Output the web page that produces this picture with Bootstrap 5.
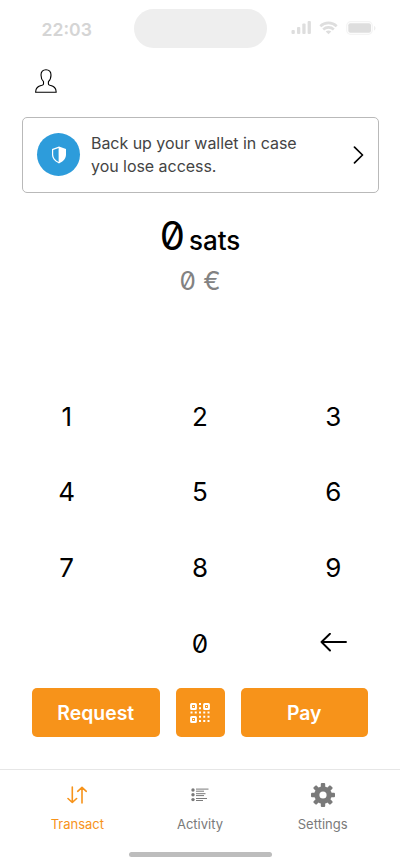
<!DOCTYPE html>
<html lang="en">
<head>
<meta charset="utf-8">
<meta name="viewport" content="width=device-width, initial-scale=1">
<title>Wallet</title>
<link href="https://cdn.jsdelivr.net/npm/bootstrap@5.3.0/dist/css/bootstrap.min.css" rel="stylesheet">
<style>
body{font-family:Inter,"Liberation Sans",sans-serif;color:#000;background:#fff}
svg{display:block;flex:none}
.screen{width:400px;height:866px;overflow:hidden}
.statusbar{height:57px;padding:0 23px 0 41.5px}
.clock{width:92px;font-size:17.6px;font-weight:600;line-height:20px;color:#d5d5d5;margin-top:20px}
.island{width:133.5px;height:39.500px;margin-top:8.500px;background:#eee}
.indicators{margin-top:20px;margin-left:24px}
.profile{height:59.500px;padding:12px 0 0 35px}
.notice{margin:0 21.500px;height:76px;border:1px solid #b9b9b9;border-radius:5px;padding:0 14px 0 14.500px;font-size:16px;letter-spacing:-.04px;line-height:22.700px;color:#444}
.shield{width:43px;height:43px;background:#2d9cdb}
.notice-text{margin-left:11px;padding-top:1px}
.amounts{height:186px;padding-top:17px;font-feature-settings:"zero"}
.amount{height:51px;line-height:52px;font-size:40px;font-weight:400}
.unit{font-size:26px;font-weight:500;margin-left:4px}
.fiat{font-size:26px;line-height:40px;color:#828282}
.key{height:75.600px;font-size:26px;line-height:75.600px;font-feature-settings:"zero"}
.key-zero{padding-top:1px}
.actions{padding:0 32px;height:49px;gap:16px;margin-top:7.100px}
.btn-orange,.btn-orange:hover{background:#f7931a;color:#fff;border:0;border-radius:5px;font-size:19.400px;font-weight:600;line-height:48px;padding:1px 0 0}
.scan{width:49px}
.tabs{margin-top:32px;height:97px;border-top:1px solid #e6e6e6;padding:0 16px}
.tab{height:82px;font-size:13px;line-height:18px;color:#7a7a7a;text-decoration:none}
.tab.current{color:#f7931a}
.tab-icon{height:45px;padding-top:5px}
.home{width:143px;height:5.500px;background:#bdbdbd}
</style>
<script src="https://cdn.jsdelivr.net/npm/bootstrap@5.3.0/dist/js/bootstrap.bundle.min.js"></script>
</head>
<body>
<div class="screen d-flex flex-column">
  <header class="statusbar d-flex align-items-start">
    <div class="clock flex-shrink-0">22:03</div>
    <div class="island rounded-pill flex-shrink-0"></div>
    <svg class="indicators" width="86" height="16" viewBox="0 0 86 16">
      <g fill="#dedede"><rect x=".5" y="10" width="3.300" height="4" rx="1"/><rect x="6" y="7" width="3.300" height="7" rx="1"/><rect x="11.300" y="3.500" width="3.300" height="10.500" rx="1"/><rect x="16.600" y="1" width="3.300" height="13" rx="1"/></g>
      <g fill="none" stroke="#dedede" stroke-width="2.700"><path d="M29.300 6.200a12 12 0 0 1 16.400 0"/><path d="M32.200 9.400a8 8 0 0 1 10.600 0"/></g>
      <path d="M34.700 11.500a4.500 4.500 0 0 1 5.600 0L37.500 14.200Z" fill="#dedede"/>
      <rect x="55.700" y="1.700" width="25.600" height="12.600" rx="4" fill="none" stroke="#f4f4f4" stroke-width="1.200"/>
      <rect x="57.300" y="3.300" width="22.700" height="9.500" rx="2" fill="#dedede"/>
      <path d="M83 6v4.500c2-.7 2-3.800 0-4.500" fill="#eee"/>
    </svg>
  </header>
  <div class="profile">
    <svg width="22" height="24" viewBox="0 0 22 24" fill="none" stroke="#000" stroke-width="1.100" stroke-linejoin="round"><path d="M11 .7C7.800.7 6 2.600 6 6c0 3 .6 4.800 2.500 6.600v2.300c0 .8-.7 1-1.700 1.400C3 17.500.6 18.600.6 23.300h20.600c0-4.700-2.300-5.800-6.100-7-1-.4-1.700-.6-1.700-1.400v-2.300C15.400 10.800 16 9 16 6c0-3.400-1.800-5.300-5-5.300Z"/></svg>
  </div>
  <div class="notice d-flex align-items-center">
    <div class="shield rounded-circle d-flex align-items-center justify-content-center flex-shrink-0">
      <svg width="16" height="18" viewBox="0 0 16 18"><path d="M8 .6 15 3v5.500c0 4-2.600 6.800-7 8.900-4.400-2.100-7-4.900-7-8.900V3Z" fill="#fff"/><path d="M7.600 2 2.200 3.900v4.600c0 3.400 1.900 5.600 5.400 7.400Z" fill="#2d9cdb"/></svg>
    </div>
    <div class="notice-text flex-grow-1">Back up your wallet in case<br>you lose access.</div>
    <svg width="11" height="18" viewBox="0 0 11 18" fill="none" stroke="#000" stroke-width="1.700" stroke-linecap="round" stroke-linejoin="round"><path d="m1.500 1.200 8 7.800-8 7.800"/></svg>
  </div>
  <section class="amounts text-center">
    <div class="amount">0<span class="unit">sats</span></div>
    <div class="fiat">0 €</div>
  </section>
  <div class="row g-0 text-center">
    <div class="col-4 key">1</div><div class="col-4 key">2</div><div class="col-4 key">3</div>
    <div class="col-4 key">4</div><div class="col-4 key">5</div><div class="col-4 key">6</div>
    <div class="col-4 key">7</div><div class="col-4 key">8</div><div class="col-4 key">9</div>
    <div class="col-4 key"></div><div class="col-4 key key-zero">0</div>
    <div class="col-4 key d-flex align-items-center justify-content-center">
      <svg width="27" height="20" viewBox="0 0 27 20" fill="none" stroke="#000" stroke-width="1.900" stroke-linecap="round" stroke-linejoin="round"><path d="M26 9H1.500M10 .8 1.500 9l8.500 8.500"/></svg>
    </div>
  </div>
  <div class="actions d-flex">
    <button class="btn btn-orange col">Request</button>
    <button class="btn btn-orange scan d-flex align-items-center justify-content-center" aria-label="Scan">
      <svg width="20" height="20" viewBox="0 0 20 20"><g fill="none" stroke="#fff" stroke-width="2"><rect x="1.100" y="1.100" width="4.800" height="4.800" rx=".5"/><rect x="14.100" y="1.100" width="4.800" height="4.800" rx=".5"/><rect x="1.100" y="14.100" width="4.800" height="4.800" rx=".5"/></g><path stroke="#fff" stroke-width="2" stroke-dasharray="2 2.250" d="M9 1h2M9 5.250h2M.5 9.500h19.500M9 13.750h11M9 18h11" /><path fill="#fff" d="M3 3h1v1H3zM16 3h1v1h-1zM3 16h1v1H3z"/></svg>
    </button>
    <button class="btn btn-orange col">Pay</button>
  </div>
  <nav class="tabs d-flex flex-column align-items-center">
    <div class="d-flex w-100">
      <a href="#" class="tab current col d-flex flex-column align-items-center"><span class="tab-icon d-flex align-items-center">
        <svg width="20" height="18" viewBox="0 0 20 18" fill="none" stroke="currentColor" stroke-width="1.600" stroke-linecap="round" stroke-linejoin="round"><path d="M5.300 1v15.500M1 12.500l4.300 4 4.300-4M15 17V1.500M10.700 5.300l4.300-4 4.300 4"/></svg></span>Transact</a>
      <a href="#" class="tab col d-flex flex-column align-items-center"><span class="tab-icon d-flex align-items-center">
        <svg width="18" height="14" viewBox="0 0 18 14" fill="none" stroke="currentColor" stroke-width="1"><path d="M5 1.100h12.500M5 3.200h8M5 5.700h9.500M5 7.600h8M5 10.500h11M5 12.500h7"/><g fill="currentColor" stroke="none"><circle cx="2" cy="2" r="1.700"/><circle cx="2" cy="6.800" r="1.700"/><circle cx="2" cy="11.600" r="1.700"/></g></svg></span>Activity</a>
      <a href="#" class="tab col d-flex flex-column align-items-center"><span class="tab-icon d-flex align-items-center">
        <svg width="24" height="24" viewBox="-12 -12 24 24"><g fill="currentColor"><g id="teeth"><rect x="-2.200" y="-12" width="4.400" height="24" rx="1"/><rect x="-12" y="-2.200" width="24" height="4.400" rx="1"/></g><use href="#teeth" transform="rotate(45)"/><circle r="8.700"/></g><circle r="3.600" fill="#fff"/></svg></span>Settings</a>
    </div>
    <div class="home rounded-pill"></div>
  </nav>
</div>
</body>
</html>
